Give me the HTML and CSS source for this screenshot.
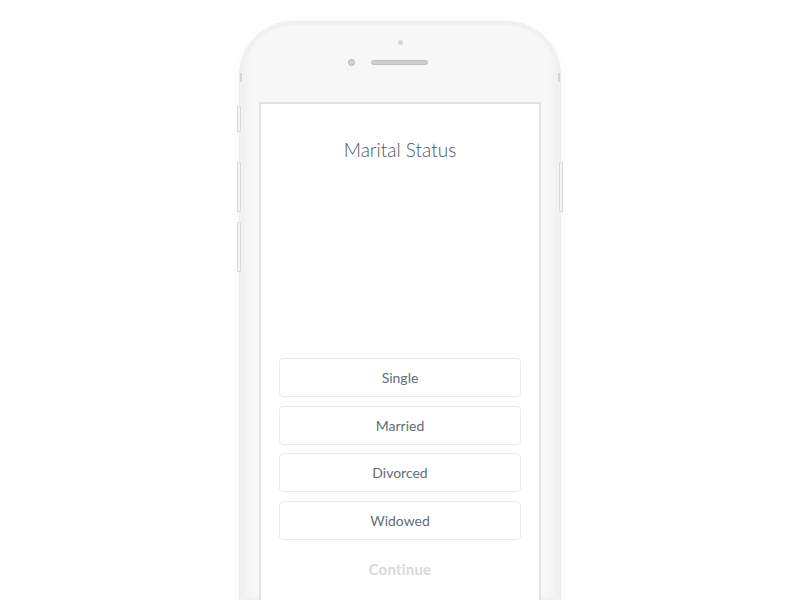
FILE: index.html
```html
<!DOCTYPE html>
<html>
<head>
<meta charset="utf-8">
<link rel="stylesheet" href="styles.css">
</head>
<body>
<div class="stage">
  <div class="phone">
    <span class="side side-l1"></span>
    <span class="side side-l2"></span>
    <span class="side side-l3"></span>
    <span class="side side-r1"></span>
    <span class="band band-l"></span>
    <span class="band band-r"></span>
    <div class="bezel">
      <div class="dot"></div>
      <div class="cam-row">
        <div class="cam"></div>
        <div class="speaker"></div>
      </div>
    </div>
    <div class="screen">
      <h1 class="title">Marital Status</h1>
      <div class="options">
        <div class="option">Single</div>
        <div class="option">Married</div>
        <div class="option">Divorced</div>
        <div class="option">Widowed</div>
      </div>
      <div class="continue">Continue</div>
    </div>
  </div>
</div>
</body>
</html>
```
FILE: styles.css
```css
html, body {
  margin: 0;
  padding: 0;
  background: #ffffff;
  overflow: hidden;
}
body {
  width: 800px;
  height: 600px;
  font-family: "Lato", "Open Sans", sans-serif;
}
.stage {
  display: flex;
  justify-content: center;
  padding-top: 22px;
}
.phone {
  position: relative;
  width: 320px;
  height: 578px;
  box-sizing: border-box;
  background: linear-gradient(to right, #e9e9e9 0px, #f3f3f3 5px, #f7f7f7 14px, #f7f7f7 306px, #f3f3f3 315px, #e8e8e8 320px);
  border-radius: 54px 54px 0 0;
  box-shadow: 0 0 0 1px #ebebeb, 0 2px 10px rgba(0,0,0,0.05), inset 0 0 0 3px #f1f1f1;
  display: flex;
  flex-direction: column;
  align-items: center;
}
.side {
  position: absolute;
  width: 2px;
  background: #f4f4f4;
  border: 1px solid #d8d8d8;
  border-radius: 1px;
}
.side-l1 { left: -3px; top: 84px; height: 24px; }
.side-l2 { left: -3px; top: 140px; height: 48px; }
.side-l3 { left: -3px; top: 200px; height: 48px; }
.side-r1 { right: -3px; top: 140px; height: 48px; }
.band {
  position: absolute;
  top: 51px;
  width: 2px;
  height: 9px;
  background: #d6d6d6;
}
.band-l { left: 0; }
.band-r { right: 0; }
.bezel {
  height: 80px;
  width: 100%;
  display: flex;
  flex-direction: column;
  align-items: center;
}
.dot {
  margin-top: 18px;
  width: 5px;
  height: 5px;
  border-radius: 50%;
  background: #d6d6d6;
  margin-left: 1px;
}
.cam-row {
  margin-top: 14px;
  display: flex;
  align-items: center;
  gap: 16px;
  margin-left: -25px;
}
.cam {
  width: 5px;
  height: 5px;
  border-radius: 50%;
  border: 1px solid #b5b5b5;
  background: #d4d4d4;
}
.speaker {
  width: 55px;
  height: 3px;
  border-radius: 3px;
  background: #cfcfcf;
  border: 1px solid #bdbdbd;
}
.screen {
  width: 282px;
  flex: 1;
  box-sizing: border-box;
  background: #ffffff;
  border: 2px solid #e2e2e2;
  border-bottom: none;
  display: flex;
  flex-direction: column;
  align-items: center;
}
.title {
  margin: 32px 0 0 0;
  font-size: 19px;
  font-weight: 300;
  color: #4c5563;
  line-height: 28px;
  letter-spacing: 0;
}
.options {
  margin-top: 194px;
  width: 242px;
  display: flex;
  flex-direction: column;
  gap: 8.5px;
}
.option {
  height: 37px;
  border: 1px solid #ebebeb;
  border-radius: 4px;
  display: flex;
  align-items: center;
  justify-content: center;
  font-size: 14px;
  color: #646c78;
  font-weight: 400;
}
.continue {
  margin-top: 20px;
  font-size: 15px;
  font-weight: 700;
  color: #d8d8d8;
  letter-spacing: 0.2px;
}
```
